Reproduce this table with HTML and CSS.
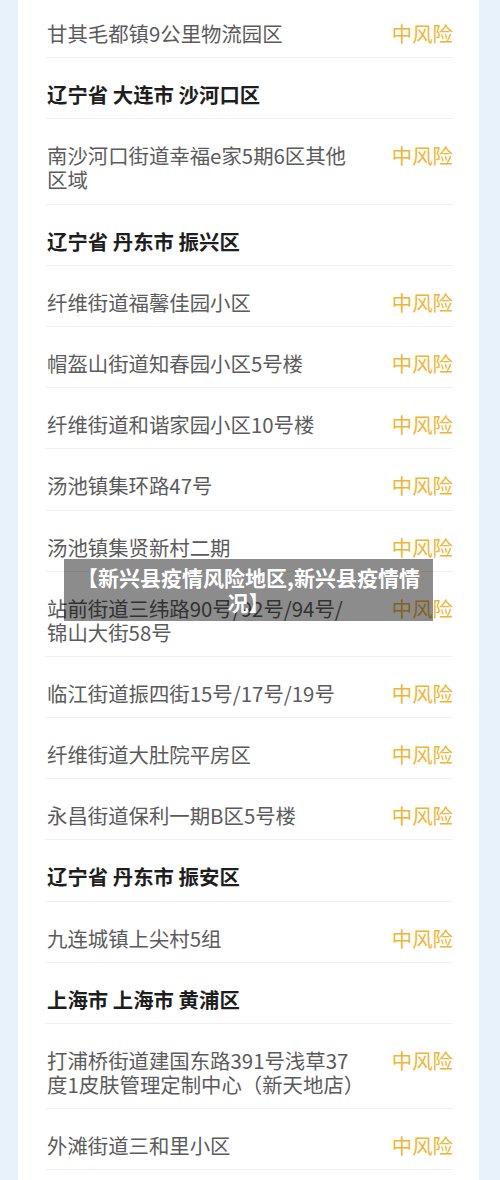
FILE: index.html
```html
<!DOCTYPE html>
<html lang="zh-CN">
<head>
    <meta charset="UTF-8">
    <meta name="viewport" content="width=device-width, initial-scale=1.0">
    <title>新兴县疫情风险地区</title>
    <link rel="stylesheet" href="styles.css">
</head>
<body>
    <main class="card">
        <ul class="risk-list">
            <li class="row">
                <span class="place">甘其毛都镇9公里物流园区</span>
                <span class="level">中风险</span>
            </li>
            <li class="row area">辽宁省 大连市 沙河口区</li>
            <li class="row">
                <span class="place">南沙河口街道幸福e家5期6区其他区域</span>
                <span class="level">中风险</span>
            </li>
            <li class="row area">辽宁省 丹东市 振兴区</li>
            <li class="row">
                <span class="place">纤维街道福馨佳园小区</span>
                <span class="level">中风险</span>
            </li>
            <li class="row">
                <span class="place">帽盔山街道知春园小区5号楼</span>
                <span class="level">中风险</span>
            </li>
            <li class="row">
                <span class="place">纤维街道和谐家园小区10号楼</span>
                <span class="level">中风险</span>
            </li>
            <li class="row">
                <span class="place">汤池镇集环路47号</span>
                <span class="level">中风险</span>
            </li>
            <li class="row">
                <span class="place">汤池镇集贤新村二期</span>
                <span class="level">中风险</span>
            </li>
            <li class="row">
                <span class="place">站前街道三纬路90号/92号/94号/锦山大街58号</span>
                <span class="level">中风险</span>
            </li>
            <li class="row">
                <span class="place">临江街道振四街15号/17号/19号</span>
                <span class="level">中风险</span>
            </li>
            <li class="row">
                <span class="place">纤维街道大肚院平房区</span>
                <span class="level">中风险</span>
            </li>
            <li class="row">
                <span class="place">永昌街道保利一期B区5号楼</span>
                <span class="level">中风险</span>
            </li>
            <li class="row area">辽宁省 丹东市 振安区</li>
            <li class="row">
                <span class="place">九连城镇上尖村5组</span>
                <span class="level">中风险</span>
            </li>
            <li class="row area">上海市 上海市 黄浦区</li>
            <li class="row">
                <span class="place">打浦桥街道建国东路391号浅草37度1皮肤管理定制中心（新天地店）</span>
                <span class="level">中风险</span>
            </li>
            <li class="row">
                <span class="place">外滩街道三和里小区</span>
                <span class="level">中风险</span>
            </li>
        </ul>
    </main>
    <div class="caption">【新兴县疫情风险地区,新兴县疫情情况】</div>
</body>
</html>
```

FILE: styles.css
```css
body {
    font-family: "Noto Sans CJK SC", "Noto Sans", sans-serif;
    margin: 0;
    padding: 0;
    background-color: #e8f2fb;
    height: 1180px;
    overflow: hidden;
    position: relative;
}

.card {
    background-color: #fff;
    margin: 0 21px 0 18px;
    padding: 0 26px 0 27px;
    min-height: 1180px;
}

.risk-list {
    list-style: none;
    margin: 0;
    padding: 0;
}

.row {
    display: flex;
    justify-content: space-between;
    align-items: flex-start;
    padding: 24px 0 12.2px 2px;
    border-bottom: 1px solid #f0f1f3;
    font-size: 20.4px;
    line-height: 24px;
}

.row:first-child {
    padding-top: 21px;
}

.place {
    width: 308px;
    color: #5b5b5b;
}

.level {
    color: #f1b535;
}

.area {
    font-weight: bold;
    color: #1e1e1e;
}

.caption {
    position: absolute;
    top: 559px;
    left: 64px;
    width: 369px;
    box-sizing: border-box;
    padding: 6px 12px 6px;
    background-color: rgba(0, 0, 0, 0.45);
    color: #fff;
    font-size: 21px;
    font-weight: bold;
    line-height: 25px;
    text-align: center;
}
```
